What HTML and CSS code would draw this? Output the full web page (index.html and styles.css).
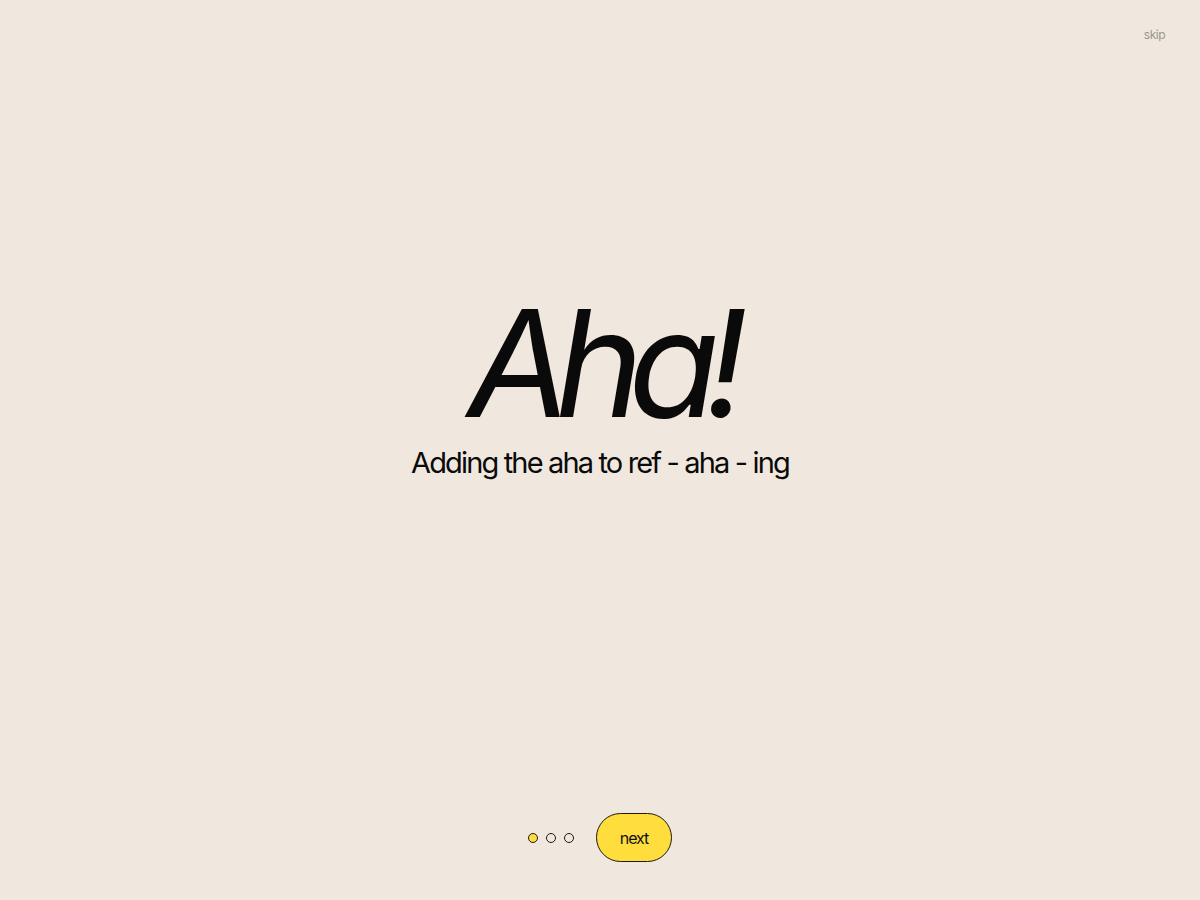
FILE: index.html
```html
<!DOCTYPE html>
<html lang="en">
<head>
<meta charset="utf-8">
<title>Aha!</title>
<link rel="stylesheet" href="styles.css">
</head>
<body>
<div class="page">
  <header class="topbar">
    <a class="skip" href="#">skip</a>
  </header>
  <main class="hero">
    <h1 class="title">Aha!</h1>
    <p class="subtitle">Adding the aha to ref - aha - ing</p>
  </main>
  <footer class="nav">
    <div class="dots">
      <span class="dot active"></span>
      <span class="dot"></span>
      <span class="dot"></span>
    </div>
    <button class="next">next</button>
  </footer>
</div>
</body>
</html>
```

FILE: styles.css
```css
html, body {
  margin: 0;
  padding: 0;
  background: #f0e8de;
}
body {
  font-family: Inter, "Noto Sans", sans-serif;
  color: #0a0a0a;
}
.page {
  height: 900px;
  display: flex;
  flex-direction: column;
}
.topbar {
  display: flex;
  justify-content: flex-end;
  padding: 27px 35px 0 0;
  height: 40px;
  box-sizing: border-box;
}
.skip {
  font-size: 12px;
  color: #9a9690;
  text-decoration: none;
  letter-spacing: -0.5px;
}
.hero {
  flex: 1;
  display: flex;
  flex-direction: column;
  align-items: center;
  padding-top: 260px;
}
.title {
  margin: 0;
  font-size: 149px;
  font-style: italic;
  font-weight: 400;
  letter-spacing: -15px;
  line-height: 0.85;
}
.subtitle {
  margin: 21px 0 0;
  font-size: 29px;
  font-weight: 400;
  letter-spacing: -1.85px;
  line-height: 1;
}
.nav {
  display: flex;
  justify-content: center;
  align-items: center;
  gap: 22px;
  padding-bottom: 38px;
}
.dots {
  display: flex;
  gap: 8px;
}
.dot {
  width: 8px;
  height: 8px;
  border-radius: 50%;
  border: 1px solid #1a1a1a;
  box-sizing: content-box;
}
.dot.active {
  background: #ffdb3c;
}
.next {
  width: 76px;
  height: 49px;
  border-radius: 25px;
  border: 1px solid #1a1a1a;
  background: #ffdd3d;
  font-family: Inter, sans-serif;
  font-size: 16px;
  font-weight: 400;
  letter-spacing: -1.1px;
  color: #111;
  padding: 0;
}
```
